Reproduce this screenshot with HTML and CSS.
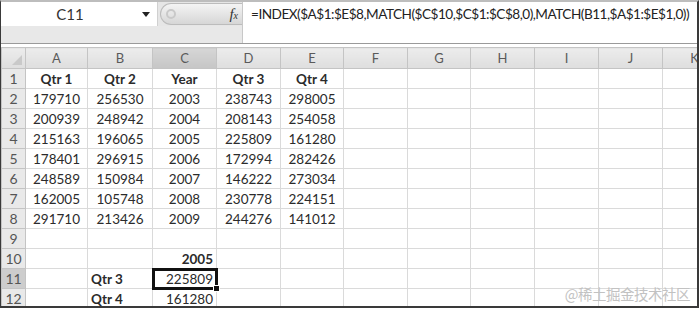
FILE: index.html
```html
<!DOCTYPE html>
<html lang="en">
<head>
<meta charset="UTF-8" />
<title>Sheet</title>
<link rel="stylesheet" href="styles.css">
</head>
<body>
<div class="window">
    <div class="formula-bar">
        <div class="namebox"><span class="cell-ref">C11</span><span class="arrow"></span></div>
        <div class="pill"><span class="pill-icon"></span><span class="fx">f<small>x</small></span></div>
        <div class="filler"></div>
        <div class="formula">=INDEX($A$1:$E$8,MATCH($C$10,$C$1:$C$8,0),MATCH(B11,$A$1:$E$1,0))</div>
    </div>
    <table class="sheet">
        <colgroup>
            <col class="c-num"><col class="c-a"><col class="c-b"><col class="c-c"><col class="c-d"><col class="c-e">
            <col class="c-f"><col class="c-g"><col class="c-h"><col class="c-i"><col class="c-j"><col class="c-k">
        </colgroup>
        <thead>
            <tr>
                <th class="corner"><span class="tri"></span></th>
                <th>A</th><th>B</th><th class="active">C</th><th>D</th><th>E</th>
                <th>F</th><th>G</th><th>H</th><th>I</th><th>J</th><th>K</th>
            </tr>
        </thead>
        <tbody id="rows"></tbody>
    </table>
    <div class="watermark">@稀土掘金技术社区</div>
</div>
<script>
const data = [
    ["Qtr 1", "Qtr 2", "Year", "Qtr 3", "Qtr 4"],
    ["179710", "256530", "2003", "238743", "298005"],
    ["200939", "248942", "2004", "208143", "254058"],
    ["215163", "196065", "2005", "225809", "161280"],
    ["178401", "296915", "2006", "172994", "282426"],
    ["248589", "150984", "2007", "146222", "273034"],
    ["162005", "105748", "2008", "230778", "224151"],
    ["291710", "213426", "2009", "244276", "141012"]
];
const tbody = document.getElementById("rows");
for (let r = 1; r <= 12; r++) {
    let row = document.createElement("tr");
    let html = `<th class="rownum${r === 11 ? " active" : ""}">${r}</th>`;
    for (let c = 0; c < 11; c++) {
        let text = "";
        let cls = "";
        if (r <= 8 && c < 5) {
            text = data[r - 1][c];
            cls = r === 1 ? "mid bold" : "mid";
        } else if (r === 10 && c === 2) {
            text = "2005"; cls = "num bold";
        } else if (r === 11 && c === 1) {
            text = "Qtr 3"; cls = "bold";
        } else if (r === 11 && c === 2) {
            text = "225809"; cls = "num selected";
        } else if (r === 12 && c === 1) {
            text = "Qtr 4"; cls = "bold";
        } else if (r === 12 && c === 2) {
            text = "161280"; cls = "num";
        }
        html += `<td class="${cls}">${text}</td>`;
    }
    row.innerHTML = html;
    tbody.appendChild(row);
}
</script>
</body>
</html>
```
FILE: styles.css
```css
html, body { margin: 0; padding: 0; background: #fff; }
body { width: 699px; height: 309px; overflow: hidden; font-family: Lato, "Open Sans", sans-serif; color: #2b2b2b; }
.window { position: relative; height: 308px; border-left: 1px solid #3a3a3a; border-right: 2px solid #3a3a3a; border-bottom: 2px solid #3a3a3a; border-top: 2px solid #bdbdbd; box-sizing: border-box; overflow: hidden; }

.formula-bar { display: grid; grid-template-columns: 157px 84px 1fr; grid-template-rows: 24px 17px; border-bottom: 1px solid #9a9a9a; background: #e6e6e6; }
.namebox { grid-column: 1; grid-row: 1; display: flex; align-items: center; background: #fff; border-right: 1px solid #d0d0d0; }
.cell-ref { flex: 1; text-align: center; font-size: 15px; color: #333; padding-left: 2px; }
.arrow { width: 0; height: 0; border-left: 4px solid transparent; border-right: 4px solid transparent; border-top: 5px solid #222; margin: 0 7px 0 5px; }
.pill { grid-column: 2; grid-row: 1; display: flex; align-items: center; justify-content: space-between; margin: 1px 0 1px 2px; border: 1px solid #bcbcbc; border-right: none; border-radius: 11px 0 0 11px; background: linear-gradient(#f4f4f4, #d6d6d6); padding: 0 4px 0 5px; }
.pill-icon { width: 10px; height: 10px; border-radius: 50%; border: 2px solid #c9c9c9; box-sizing: border-box; }
.fx { font-family: "Liberation Serif", serif; font-style: italic; font-size: 15px; color: #333; }
.fx small { font-size: 10px; }
.filler { grid-column: 1 / 3; grid-row: 2; background: #e8e8e8; }
.formula { grid-column: 3; grid-row: 1 / 3; background: #fff; padding: 4px 0 0 8px; font-size: 13.6px; letter-spacing: -0.5px; color: #222; white-space: nowrap; border-left: 1px solid #c8c8c8; }

.sheet { border-collapse: collapse; table-layout: fixed; width: 726px; margin-top: 3px; border-top: 1px solid #a8a8a8; }
.c-num { width: 24px; }
.c-a { width: 62px; }
.c-b { width: 65px; }
.c-c, .c-d, .c-f, .c-h, .c-i, .c-j, .c-k { width: 64px; }
.c-e, .c-g { width: 63px; }
.sheet th { height: 18px; background: linear-gradient(#ececec, #dedede); border: 1px solid #c4c4c4; font-weight: normal; font-size: 13px; color: #5a5a5a; padding: 0; }
.sheet thead th { height: 20px; }
.sheet th.active { background: linear-gradient(#d6d6d6, #c6c6c6); }
.sheet .corner { position: relative; }
.tri { position: absolute; right: 3px; bottom: 3px; width: 0; height: 0; border-left: 10px solid transparent; border-bottom: 10px solid #c9c9c9; }
.sheet tbody th { background: #e9e9e9; color: #555; font-size: 14px; }
.sheet tbody th.active { background: #cdcdcd; }
.sheet td { height: 19px; border: 1px solid #dadada; font-size: 13.5px; padding: 0 3px; white-space: nowrap; overflow: visible; }
.mid { text-align: center; }
.num { text-align: right; }
.bold { font-weight: bold; }
.selected { position: relative; outline: 3px solid #111; outline-offset: -2px; }
.selected::after { content: ""; position: absolute; right: -4px; bottom: -4px; width: 5px; height: 5px; background: #111; border: 1px solid #fff; }

.watermark { position: absolute; right: 7px; bottom: 2px; font-family: "Noto Sans CJK SC", sans-serif; font-size: 14.5px; color: #c2c2c2; letter-spacing: -0.5px; }
```
